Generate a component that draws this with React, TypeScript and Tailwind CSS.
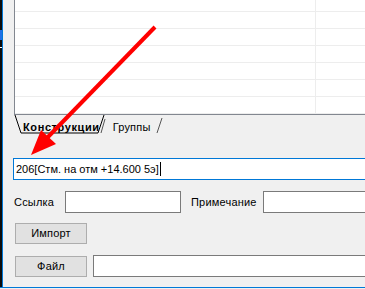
export default function App() {
  const rows = [12, 17, 17, 17, 17, 17, 17];

  return (
    <div className="relative flex h-[289px] w-[365px] flex-col overflow-hidden bg-[#f0f0f0] font-['Liberation_Sans',Arial,sans-serif] text-[11px] leading-none tracking-[0.2px] text-black">
      <div className="flex h-[287px]">
        {/* window edge */}
        <div className="flex w-[2px] flex-col bg-[#0c0c0c]">
          <div className="mt-[30px] h-[10px] bg-[#1f6fe6]" />
          <div className="mt-[7px] h-px bg-white" />
        </div>
        <div className="w-px bg-[#0078d7]" />

        <div className="flex flex-1 flex-col pl-[11px]">
          {/* grid */}
          <div className="flex h-[115px] flex-col border-b border-l border-[#828790] bg-white">
            {rows.map((h, i) => (
              <div
                key={i}
                className={`flex border-b border-[#ededed] ${h === 12 ? "h-[12px]" : "h-[17px]"}`}
              >
                <div className="w-[301px] border-r border-[#ededed]" />
                <div className="flex-1" />
              </div>
            ))}
          </div>

          {/* tabs */}
          <div className="relative flex h-[20px] items-start pl-[9px] pt-[7px]">
            <svg className="absolute left-0 top-0" width="160" height="20" viewBox="0 0 160 20">
              <polyline points="1,0 7,18 84,18 90,0" fill="#f0f0f0" stroke="#000" strokeWidth="1" />
              <polyline points="91,4 87,18" fill="none" stroke="#555" strokeWidth="1" />
              <polyline points="148,3 143,18" fill="none" stroke="#555" strokeWidth="1" />
            </svg>
            <span className="relative font-bold tracking-[0.6px]">Конструкции</span>
            <span className="relative ml-[13px]">Группы</span>
          </div>

          {/* main text box */}
          <div className="-ml-px -mr-[4px] mt-[23px] flex h-[22px] items-center border border-[#0078d7] bg-white pl-[2px] tracking-normal">
            <span>206[Стм. на отм +14.600 5э]</span>
            <span className="ml-px h-[14px] w-px bg-black" />
          </div>

          {/* link / note */}
          <div className="mt-[11px] flex items-center">
            <span className="w-[51px]">Ссылка</span>
            <div className="h-[22px] w-[116px] border border-[#7a7a7a] bg-white" />
            <span className="ml-[10px] w-[72px]">Примечание</span>
            <div className="-mr-[4px] h-[22px] flex-1 border border-[#7a7a7a] bg-white" />
          </div>

          <button className="ml-px mt-[10px] flex h-[21px] w-[72px] items-center justify-center border border-[#adadad] bg-[#e1e1e1]">
            Импорт
          </button>

          <div className="mt-[11px] flex items-center">
            <button className="ml-px flex h-[21px] w-[72px] items-center justify-center border border-[#adadad] bg-[#e1e1e1]">
              Файл
            </button>
            <div className="-mr-[4px] ml-[6px] h-[22px] flex-1 border border-[#7a7a7a] bg-white" />
          </div>
        </div>
      </div>
      <div className="h-px bg-[#0078d7]" />
      <div className="flex-1 bg-[#f0f0f0]" />

      {/* red callout arrow */}
      <svg className="pointer-events-none absolute left-0 top-0" width="365" height="289" viewBox="0 0 365 289">
        <line x1="155" y1="27" x2="46" y2="139" stroke="#ff0000" strokeWidth="4" />
        <polygon points="31,155 41,130 56,144" fill="#ff0000" />
      </svg>
    </div>
  );
}
